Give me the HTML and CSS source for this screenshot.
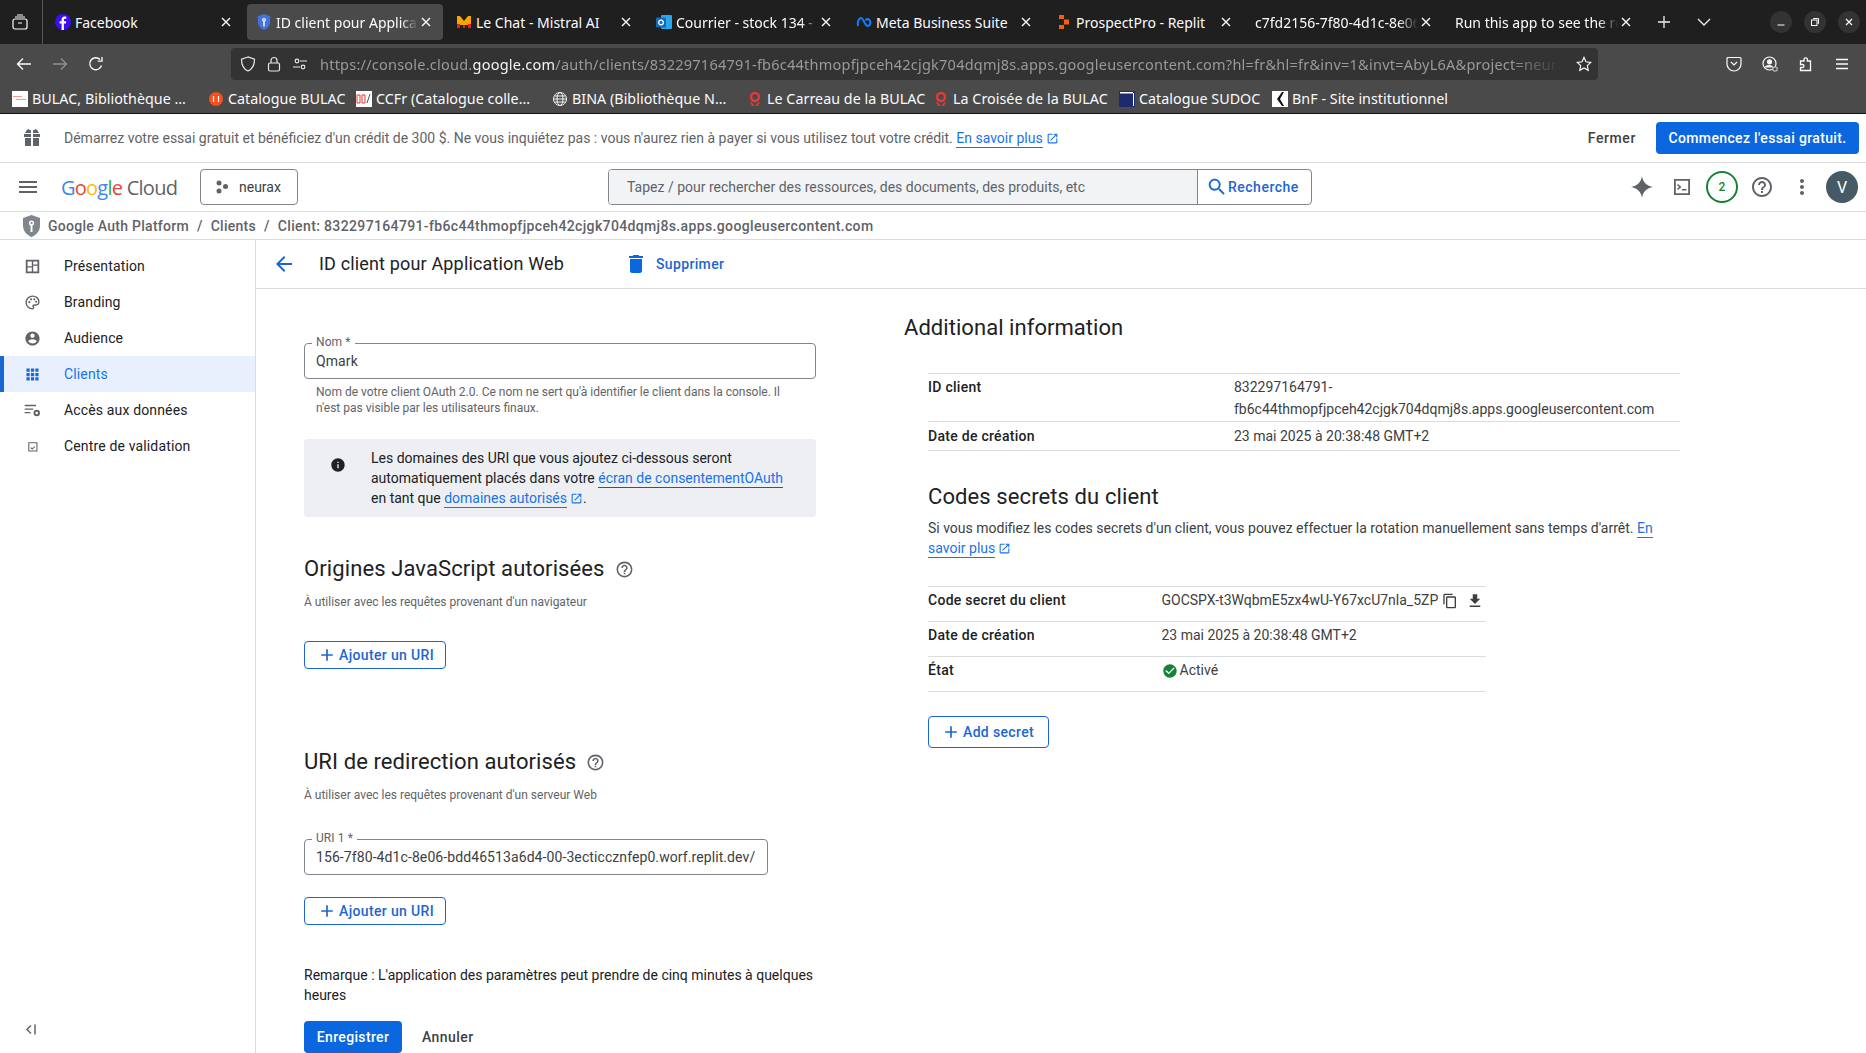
FILE: index.html
```html
<!DOCTYPE html>
<html lang="fr">
<head>
<meta charset="utf-8">
<title>ID client pour Application Web</title>
<link rel="stylesheet" href="styles.css">
</head>
<body>
<svg class="defs" aria-hidden="true">
  <symbol id="i-back" viewBox="0 0 24 24"><path d="M20 11H7.83l5.59-5.59L12 4l-8 8 8 8 1.41-1.41L7.83 13H20v-2z"/></symbol>
  <symbol id="i-menu" viewBox="0 0 24 24"><path d="M3 18h18v-2H3v2zm0-5h18v-2H3v2zm0-7v2h18V6H3z"/></symbol>
  <symbol id="i-del" viewBox="0 0 24 24"><path d="M6 19c0 1.1.9 2 2 2h8c1.100 0 2-.9 2-2V7H6v12zM19 4h-3.500l-1-1h-5l-1 1H5v2h14V4z"/></symbol>
  <symbol id="i-help" viewBox="0 0 24 24"><path d="M11 18h2v-2h-2v2zm1-16C6.480 2 2 6.480 2 12s4.480 10 10 10 10-4.480 10-10S17.520 2 12 2zm0 18c-4.410 0-8-3.590-8-8s3.590-8 8-8 8 3.590 8 8-3.590 8-8 8zm0-14c-2.210 0-4 1.790-4 4h2c0-1.100.9-2 2-2s2 .9 2 2c0 2-3 1.750-3 5h2c0-2.250 3-2.500 3-5 0-2.210-1.790-4-4-4z"/></symbol>
  <symbol id="i-info" viewBox="0 0 24 24"><path d="M12 2C6.480 2 2 6.480 2 12s4.480 10 10 10 10-4.480 10-10S17.520 2 12 2zm1 15h-2v-6h2v6zm0-8h-2V7h2v2z"/></symbol>
  <symbol id="i-add" viewBox="0 0 24 24"><path d="M19 13h-6v6h-2v-6H5v-2h6V5h2v6h6v2z"/></symbol>
  <symbol id="i-search" viewBox="0 0 24 24"><path d="M15.500 14h-.79l-.28-.27C15.410 12.590 16 11.110 16 9.500 16 5.910 13.090 3 9.500 3S3 5.910 3 9.500 5.910 16 9.500 16c1.610 0 3.090-.59 4.230-1.570l.27.28v.79l5 4.990L20.490 19l-4.990-5zm-6 0C7.010 14 5 11.990 5 9.500S7.010 5 9.500 5 14 7.010 14 9.500 11.990 14 9.500 14z"/></symbol>
  <symbol id="i-more" viewBox="0 0 24 24"><path d="M12 8c1.100 0 2-.9 2-2s-.9-2-2-2-2 .9-2 2 .9 2 2 2zm0 2c-1.100 0-2 .9-2 2s.9 2 2 2 2-.9 2-2-.9-2-2-2zm0 6c-1.100 0-2 .9-2 2s.9 2 2 2 2-.9 2-2-.9-2-2-2z"/></symbol>
  <symbol id="i-copy" viewBox="0 0 24 24"><path d="M16 1H4c-1.100 0-2 .9-2 2v14h2V3h12V1zm3 4H8c-1.100 0-2 .9-2 2v14c0 1.100.9 2 2 2h11c1.100 0 2-.9 2-2V7c0-1.100-.9-2-2-2zm0 16H8V7h11v14z"/></symbol>
  <symbol id="i-dl" viewBox="0 0 24 24"><path d="M19 9h-4V3H9v6H5l7 7 7-7zM5 18v2h14v-2H5z"/></symbol>
  <symbol id="i-ok" viewBox="0 0 24 24"><path d="M12 2C6.480 2 2 6.480 2 12s4.480 10 10 10 10-4.480 10-10S17.520 2 12 2zm-2 15l-5-5 1.410-1.410L10 14.170l7.590-7.590L19 8l-9 9z"/></symbol>
  <symbol id="i-ext" viewBox="0 0 24 24"><path d="M19 19H5V5h7V3H5c-1.110 0-2 .9-2 2v14c0 1.100.89 2 2 2h14c1.100 0 2-.9 2-2v-7h-2v7zM14 3v2h3.590l-9.830 9.830 1.410 1.410L19 6.410V10h2V3h-7z"/></symbol>
  <symbol id="i-person" viewBox="0 0 24 24"><path d="M12 2C6.480 2 2 6.480 2 12s4.480 10 10 10 10-4.480 10-10S17.520 2 12 2zm0 3c1.660 0 3 1.340 3 3s-1.340 3-3 3-3-1.340-3-3 1.340-3 3-3zm0 14.200c-2.500 0-4.710-1.280-6-3.220.03-1.990 4-3.080 6-3.080 1.990 0 5.970 1.090 6 3.080-1.290 1.940-3.500 3.220-6 3.220z"/></symbol>
  <symbol id="i-close" viewBox="0 0 16 16"><path d="M4 4l8 8M12 4l-8 8" fill="none" stroke="currentColor" stroke-width="1.400"/></symbol>
  <symbol id="i-shield" viewBox="3 1 18 22"><path d="M12 1 3.500 4v7.500c0 5.300 3.600 9.500 8.500 11.500 4.900-2 8.500-6.200 8.500-11.500V4z"/><circle cx="12" cy="9" r="2.600" fill="#fff"/><rect x="11" y="11" width="2" height="7" fill="#fff"/><circle cx="12" cy="9" r="1.100"/></symbol>
</svg>

<div class="tabstrip">
  <div class="tabs-menu">
    <svg class="ff-ic" viewBox="0 0 16 16" fill="none" stroke="currentColor" stroke-width="1.200"><rect x="1" y="5" width="14" height="10" rx="2"/><path d="M3 3h10M5 1h6M6 9h4"/></svg>
  </div>
  <div class="tab">
    <svg class="fav" viewBox="0 0 16 16"><circle cx="8" cy="8" r="8" fill="#3b10f0"/><path d="M8.900 16V9.500h2l.3-2.300H8.900V5.800c0-.7.3-1.100 1.200-1.100h1.200v-2c-.5-.1-1.100-.1-1.700-.1-1.800 0-3 1.100-3 3v1.600h-2v2.300h2V16z" fill="#fff"/></svg>
    <span class="tab-title">Facebook</span>
    <svg class="tab-x"><use href="#i-close"/></svg>
  </div>
  <div class="tab active">
    <svg class="fav shield-blue"><use href="#i-shield"/></svg>
    <span class="tab-title fade">ID client pour Application Web</span>
    <svg class="tab-x"><use href="#i-close"/></svg>
  </div>
  <div class="tab">
    <svg class="fav" viewBox="0 0 16 16"><path d="M1 14V2h3l4 5 4-5h3v12h-3v-3H9v3H7v-3H4v3z" fill="#f7a600"/><path d="M1 14v-4h3v4zM12 14v-4h3v4zM7 14v-3h2v3z" fill="#e8201a"/></svg>
    <span class="tab-title">Le Chat - Mistral AI</span>
    <svg class="tab-x"><use href="#i-close"/></svg>
  </div>
  <div class="tab">
    <svg class="fav" viewBox="0 0 16 16"><rect x="5" y="1" width="11" height="14" rx="1" fill="#28a8ea"/><rect x="0" y="3.500" width="10" height="10" rx="1" fill="#0f6cbd"/><circle cx="5" cy="8.500" r="2.300" fill="none" stroke="#fff" stroke-width="1.300"/></svg>
    <span class="tab-title fade">Courrier - stock 134 - Outlook</span>
    <svg class="tab-x"><use href="#i-close"/></svg>
  </div>
  <div class="tab">
    <svg class="fav" viewBox="0 0 16 16" fill="none" stroke="#1a7cf5" stroke-width="2"><path d="M2 12C1 8 3 4 5 4c2.500 0 4 8 6.500 8C14 12 15 9 14 7c-1-2-3-3-4.500-.5"/></svg>
    <span class="tab-title">Meta Business Suite</span>
    <svg class="tab-x"><use href="#i-close"/></svg>
  </div>
  <div class="tab">
    <svg class="fav" viewBox="0 0 16 16"><path d="M3 1h5v4H3zM8 5.500h5v5H8zM3 11h5v4H3z" fill="#f26207"/></svg>
    <span class="tab-title">ProspectPro - Replit</span>
    <svg class="tab-x"><use href="#i-close"/></svg>
  </div>
  <div class="tab nofav">
    <span class="tab-title fade">c7fd2156-7f80-4d1c-8e06-bdd46513a6d4</span>
    <svg class="tab-x"><use href="#i-close"/></svg>
  </div>
  <div class="tab nofav">
    <span class="tab-title fade">Run this app to see the results here</span>
    <svg class="tab-x"><use href="#i-close"/></svg>
  </div>
  <div class="tab-tools">
    <svg class="tool-s" viewBox="0 0 16 16" fill="none" stroke="currentColor" stroke-width="1.300"><path d="M8 2v12M2 8h12"/></svg>
    <svg class="tool-s" viewBox="0 0 16 16" fill="none" stroke="currentColor" stroke-width="1.300"><path d="M2 5l6 6 6-6"/></svg>
  </div>
  <div class="win-ctl">
    <span class="win-btn"><svg viewBox="0 0 12 12" fill="none" stroke="currentColor"><path d="M2.500 9h7"/></svg></span>
    <span class="win-btn"><svg viewBox="0 0 12 12" fill="none" stroke="currentColor"><rect x="2.500" y="4" width="5.500" height="5.500"/><path d="M4.500 3.500V2.500h5v5h-1"/></svg></span>
    <span class="win-btn"><svg viewBox="0 0 12 12" fill="none" stroke="currentColor" stroke-width="1.200"><path d="M3 3l6 6M9 3l-6 6"/></svg></span>
  </div>
</div>

<div class="toolbar">
  <div class="nav-btns">
    <svg class="ff-ic" viewBox="0 0 16 16" fill="none" stroke="currentColor" stroke-width="1.300"><path d="M15 8H1.500M7 2.500 1.500 8 7 13.500"/></svg>
    <svg class="ff-ic dim" viewBox="0 0 16 16" fill="none" stroke="currentColor" stroke-width="1.300"><path d="M1 8h13.500M9 2.500 14.500 8 9 13.500"/></svg>
    <svg class="ff-ic" viewBox="0 0 16 16" fill="none" stroke="currentColor" stroke-width="1.300"><path d="M13.500 9.500A6 6 0 1 1 12 3.500"/><path d="M14 1v4.200H9.800" /></svg>
  </div>
  <div class="urlbar">
    <svg class="ff-ic url-ic" viewBox="0 0 16 16" fill="none" stroke="currentColor" stroke-width="1.200"><path d="M8 1 1.500 3.200c0 6 2 9.800 6.500 11.800 4.500-2 6.500-5.800 6.500-11.800z"/></svg>
    <svg class="ff-ic url-ic" viewBox="0 0 16 16" fill="none" stroke="currentColor" stroke-width="1.200"><rect x="2.500" y="7" width="11" height="8" rx="1.500"/><path d="M5 7V4.500a3 3 0 0 1 6 0V7"/></svg>
    <svg class="ff-ic url-ic" viewBox="0 0 16 16" fill="none" stroke="currentColor" stroke-width="1.200"><path d="M8 5h7M1 11h7"/><circle cx="5" cy="5" r="1.800"/><circle cx="11" cy="11" r="1.800"/></svg>
    <span class="url-text">https://console.cloud.<b>google.com</b>/auth/clients/832297164791-fb6c44thmopfjpceh42cjgk704dqmj8s.apps.googleusercontent.com?hl=fr&amp;hl=fr&amp;inv=1&amp;invt=AbyL6A&amp;project=neura</span>
    <svg class="ff-ic url-star" viewBox="0 0 16 16" fill="none" stroke="currentColor" stroke-width="1.200"><path d="M8 1.500l2 4.300 4.700.6-3.400 3.200.9 4.700L8 12l-4.200 2.300.9-4.700L1.300 6.400 6 5.800z"/></svg>
  </div>
  <div class="ext-btns">
    <svg class="ff-ic" viewBox="0 0 16 16" fill="none" stroke="currentColor" stroke-width="1.200"><path d="M2 1.500h12a1 1 0 0 1 1 1V8a7 7 0 0 1-14 0V2.500a1 1 0 0 1 1-1z"/><path d="M5 6 8 9l3-3"/></svg>
    <svg class="ff-ic" viewBox="0 0 16 16" fill="none" stroke="currentColor" stroke-width="1.200"><circle cx="7.500" cy="7.500" r="6.500"/><circle cx="7.500" cy="5.800" r="2" fill="currentColor"/><path d="M3.500 11c1-2 6-2 7 0z" fill="currentColor"/><circle cx="13" cy="13" r="2.200" fill="#4a4a4a" stroke="#bbb"/></svg>
    <svg class="ff-ic" viewBox="0 0 16 16" fill="none" stroke="currentColor" stroke-width="1.300"><path d="M2.500 5H6V3.500a1.700 1.700 0 0 1 3.400 0V5h3.100v9.500H2.500V11.500h2a1.500 1.500 0 0 0 0-3h-2z"/></svg>
    <svg class="ff-ic" viewBox="0 0 16 16" fill="none" stroke="currentColor" stroke-width="1.300"><path d="M2 3.500h12M2 8h12M2 12.500h12"/></svg>
  </div>
</div>

<div class="bookmarks">
  <div class="bm"><svg class="bm-ic" viewBox="0 0 16 16"><rect width="16" height="16" fill="#fff"/><path d="M1 5h9v1H1zM4 8h10v1H4z" fill="#f0a080"/></svg><span>BULAC, Bibliothèque …</span></div>
  <div class="bm"><svg class="bm-ic" viewBox="0 0 16 16"><circle cx="8" cy="8" r="7" fill="#f4511e"/><path d="M5.500 5v6M10.500 5v6" stroke="#fff" stroke-width="1.200"/></svg><span>Catalogue BULAC</span></div>
  <div class="bm"><svg class="bm-ic" viewBox="0 0 16 16"><rect width="16" height="16" fill="#fff"/><path d="M1 4h3v8H1zM6 4h3v8H6z" fill="none" stroke="#e53935"/><path d="M11 12l3-9" stroke="#555"/></svg><span>CCFr (Catalogue colle…</span></div>
  <div class="bm"><svg class="bm-ic" viewBox="0 0 16 16" fill="none" stroke="#f5f5f5" stroke-width="1"><circle cx="8" cy="8" r="6.500"/><ellipse cx="8" cy="8" rx="3" ry="6.500"/><path d="M1.500 8h13M2.500 5h11M2.500 11h11"/></svg><span>BINA (Bibliothèque N…</span></div>
  <div class="bm"><svg class="bm-ic" viewBox="0 0 16 16"><circle cx="8" cy="6" r="4" fill="none" stroke="#e53935" stroke-width="2.500"/><path d="M3 11c3 0 3 3 5 4 2-1 2-4 5-4l-2 4H5z" fill="#e53935"/></svg><span>Le Carreau de la BULAC</span></div>
  <div class="bm"><svg class="bm-ic" viewBox="0 0 16 16"><circle cx="8" cy="6" r="4" fill="none" stroke="#e53935" stroke-width="2.500"/><path d="M3 11c3 0 3 3 5 4 2-1 2-4 5-4l-2 4H5z" fill="#e53935"/></svg><span>La Croisée de la BULAC</span></div>
  <div class="bm"><svg class="bm-ic" viewBox="0 0 16 16"><rect width="16" height="16" fill="#1e2a6e"/><path d="M1 1h13v1.500H1z" fill="#fff"/><path d="M14 2h1v13h-1z" fill="#fff"/></svg><span>Catalogue SUDOC</span></div>
  <div class="bm"><svg class="bm-ic" viewBox="0 0 16 16"><rect width="16" height="16" fill="#fff"/><path d="M10 1 5 8l5 7h2L8 8l4-7z" fill="#111"/></svg><span>BnF - Site institutionnel</span></div>
</div>

<div class="banner">
  <svg class="gift" viewBox="0 0 18 18"><path d="M2 4h6V1.500L5 0 3.500 1.500zM10 4h6l-1.500-2.500L13 0l-3 1.500zM1 5h7v3H1zM10 5h7v3h-7zM2 9h6v8H2zM10 9h6v8h-6z"/></svg>
  <p class="banner-text">Démarrez votre essai gratuit et bénéficiez d'un crédit de 300 $. Ne vous inquiétez pas : vous n'aurez rien à payer si vous utilisez tout votre crédit. <a class="lnk">En savoir plus</a><svg class="ext"><use href="#i-ext"/></svg></p>
  <span class="fermer">Fermer</span>
  <span class="btn-solid trial">Commencez l'essai gratuit.</span>
</div>

<header class="topbar">
  <svg class="ic24 menu-ic"><use href="#i-menu"/></svg>
  <div class="logo"><span class="g-b">G</span><span class="g-r">o</span><span class="g-y">o</span><span class="g-b">g</span><span class="g-g">l</span><span class="g-r">e</span> <span class="g-c">Cloud</span></div>
  <div class="project">
    <svg class="proj-ic" viewBox="0 0 14 14"><circle cx="4" cy="3" r="2.500"/><circle cx="10.500" cy="6.500" r="2.500"/><circle cx="4" cy="11" r="2.500"/></svg>
    <span>neurax</span>
  </div>
  <div class="search">
    <span class="search-input">Tapez / pour rechercher des ressources, des documents, des produits, etc</span>
    <span class="search-btn"><svg class="ic22"><use href="#i-search"/></svg>Recherche</span>
  </div>
  <div class="top-icons">
    <span class="top-ic"><svg class="ic24" viewBox="0 0 24 24"><path d="M12 1c.8 6 5 10.200 11 11-6 .8-10.200 5-11 11-.8-6-5-10.200-11-11 6-.8 10.200-5 11-11z"/></svg></span>
    <span class="top-ic"><svg class="term" viewBox="0 0 18 18"><path d="M1 1h16v16H1zm1.800 1.800v12.400h12.400V2.800zM5 6l3.500 3L5 12l-1-1 2-2-2-2zm4 5h4.500v1.500H9z" fill-rule="evenodd"/></svg></span>
    <span class="top-ic"><span class="badge">2</span></span>
    <span class="top-ic"><svg class="ic24"><use href="#i-help"/></svg></span>
    <span class="top-ic"><svg class="ic24"><use href="#i-more"/></svg></span>
    <span class="top-ic"><span class="avatar">V</span></span>
  </div>
</header>

<nav class="crumbs">
  <svg class="crumb-shield"><use href="#i-shield"/></svg>
  <span>Google Auth Platform</span><i>/</i><span>Clients</span><i>/</i><span class="crumb-last">Client: 832297164791-fb6c44thmopfjpceh42cjgk704dqmj8s.apps.googleusercontent.com</span>
</nav>

<div class="app">
  <aside class="side">
    <ul class="side-list">
      <li class="side-item"><svg class="side-ic" viewBox="0 0 24 24"><path d="M2.500 2.500h19v19h-19zm2.500 2.500v6.500h6v-6.500zm8 0v4h6v-4zm0 6v8h6v-8zm-8 2.500v5.500h6v-5.500z" fill-rule="evenodd"/></svg>Présentation</li>
      <li class="side-item"><svg class="side-ic" viewBox="0 0 24 24"><path d="M12 3a9 9 0 0 0 0 18c1 0 1.600-.7 1.600-1.500 0-1.100-.9-1.400-.9-2.500 0-.9.800-1.500 1.700-1.500H16c2.800 0 5-2.200 5-5 0-4.200-4-7.500-9-7.500z" fill="none" stroke="currentColor" stroke-width="2"/><circle cx="7.500" cy="11.500" r="1.500"/><circle cx="10" cy="7.500" r="1.500"/><circle cx="14.500" cy="7.500" r="1.500"/><circle cx="17" cy="11" r="1.500"/></svg>Branding</li>
      <li class="side-item"><svg class="side-ic"><use href="#i-person"/></svg>Audience</li>
      <li class="side-item current"><svg class="side-ic" viewBox="0 0 24 24"><path d="M3.500 3.500h4.500v4.500H3.500zM9.800 3.500h4.500v4.500H9.800zM16 3.500h4.500v4.500H16zM3.500 9.800h4.500v4.500H3.500zM9.800 9.800h4.500v4.500H9.800zM16 9.800h4.500v4.500H16zM3.500 16h4.500v4.500H3.500zM9.800 16h4.500v4.500H9.800zM16 16h4.500v4.500H16z"/></svg>Clients</li>
      <li class="side-item"><svg class="side-ic" viewBox="0 0 24 24"><path d="M1 4h16v2H1zM1 9h12v2H1zM1 14h8v2H1z"/><circle cx="18" cy="15.500" r="3.200" fill="none" stroke="currentColor" stroke-width="2.600"/></svg>Accès aux données</li>
      <li class="side-item"><svg class="side-ic" viewBox="0 0 24 24"><path d="M6 6h13v13H6zm1.500 1.500v10h10v-10zm2.500 5.500 1.600 1.600 3-3 1 1-4 4-2.600-2.600z" fill-rule="evenodd"/></svg>Centre de validation</li>
    </ul>
    <svg class="collapse" viewBox="0 0 16 16" fill="none" stroke="currentColor" stroke-width="1.500"><path d="M12 2.500v10M8 3.500 4 7.500l4 4"/></svg>
  </aside>

  <main class="page">
    <div class="page-head">
      <svg class="ic24 back"><use href="#i-back"/></svg>
      <h1>ID client pour Application Web</h1>
      <span class="del"><svg class="ic24"><use href="#i-del"/></svg>Supprimer</span>
    </div>
    <div class="cols">
      <section class="col-left">
        <div class="field name-field">
          <label>Nom *</label>
          <span>Qmark</span>
        </div>
        <p class="hint">Nom de votre client OAuth 2.0. Ce nom ne sert qu'à identifier le client dans la console. Il n'est pas visible par les utilisateurs finaux.</p>
        <div class="note-box">
          <svg class="note-ic"><use href="#i-info"/></svg>
          <p>Les domaines des URI que vous ajoutez ci-dessous seront automatiquement placés dans votre <a class="lnk visited">écran de consentementOAuth</a> en tant que <a class="lnk">domaines autorisés</a><svg class="ext"><use href="#i-ext"/></svg>.</p>
        </div>
        <h2 class="sec first">Origines JavaScript autorisées<svg class="help"><use href="#i-help"/></svg></h2>
        <p class="sub">À utiliser avec les requêtes provenant d'un navigateur</p>
        <span class="btn-out add-js"><svg class="ic20"><use href="#i-add"/></svg>Ajouter un URI</span>
        <h2 class="sec second">URI de redirection autorisés<svg class="help"><use href="#i-help"/></svg></h2>
        <p class="sub">À utiliser avec les requêtes provenant d'un serveur Web</p>
        <div class="field uri-field">
          <label>URI 1 *</label>
          <span>156-7f80-4d1c-8e06-bdd46513a6d4-00-3ecticcznfep0.worf.replit.dev/</span>
        </div>
        <span class="btn-out add-uri"><svg class="ic20"><use href="#i-add"/></svg>Ajouter un URI</span>
        <p class="remark">Remarque : L'application des paramètres peut prendre de cinq minutes à quelques heures</p>
        <div class="actions">
          <span class="btn-solid save">Enregistrer</span>
          <span class="cancel">Annuler</span>
        </div>
      </section>

      <section class="col-right">
        <h2 class="additional">Additional information</h2>
        <dl class="info-table">
          <div class="row row-id"><dt>ID client</dt><dd>832297164791-<br>fb6c44thmopfjpceh42cjgk704dqmj8s.apps.googleusercontent.com</dd></div>
          <div class="row"><dt>Date de création</dt><dd>23 mai 2025 à 20:38:48 GMT+2</dd></div>
        </dl>
        <h2 class="sec secrets">Codes secrets du client</h2>
        <p class="secrets-text">Si vous modifiez les codes secrets d'un client, vous pouvez effectuer la rotation manuellement sans temps d'arrêt. <a class="lnk">En savoir plus</a><svg class="ext"><use href="#i-ext"/></svg></p>
        <dl class="secret-table">
          <div class="srow"><dt>Code secret du client</dt><dd>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<svg class="ic16 copy"><use href="#i-copy"/></svg><svg class="ic18 dl"><use href="#i-dl"/></svg></dd></div>
          <div class="srow"><dt>Date de création</dt><dd>23 mai 2025 à 20:38:48 GMT+2</dd></div>
          <div class="srow"><dt>État</dt><dd><svg class="ic16 ok"><use href="#i-ok"/></svg>Activé</dd></div>
        </dl>
        <span class="btn-out add-secret"><svg class="ic20"><use href="#i-add"/></svg>Add secret</span>
      </section>
    </div>
  </main>
</div>
</body>
</html>
```
FILE: styles.css
```css
* { box-sizing: border-box; }
html, body { margin: 0; padding: 0; }
body {
  width: 1866px;
  height: 1053px;
  overflow: hidden;
  background: #fff;
  color: #202124;
  font-family: Roboto, "Liberation Sans", sans-serif;
  font-size: 14px;
  display: flex;
  flex-direction: column;
}
p, h1, h2, ul, dl, dd { margin: 0; padding: 0; }
ul { list-style: none; }
.defs { display: none; }
svg { flex: none; }

/* Browser chrome */
.tabstrip {
  height: 44px;
  flex: none;
  background: #1f1f1f;
  color: #fbfbfe;
  display: flex;
  align-items: center;
  font-family: "Noto Sans", sans-serif;
  font-size: 14px;
}
.tabs-menu {
  width: 43px;
  height: 44px;
  border-right: 1px solid #555;
  display: flex;
  align-items: center;
  justify-content: center;
  flex: none;
  padding-right: 2px;
}
.ff-ic { width: 16px; height: 16px; }
.tab {
  width: 196px;
  height: 36px;
  margin: 0 2px;
  flex: none;
  border-radius: 4px;
  padding: 0 9px 0 9px;
  display: flex;
  align-items: center;
  gap: 4px;
}
.tab:nth-child(2) { margin-left: 4px; padding-left: 8px; }
.tab.active { background: #4a4a4a; }
.tab.nofav { padding-left: 8px; }
.fav { width: 16px; height: 16px; }
.shield-blue { fill: #4372d9; }
.tab-title { flex: 1; min-width: 0; white-space: nowrap; overflow: hidden; }
.tab-title.fade {
  -webkit-mask-image: linear-gradient(to right, #000 88%, transparent 100%);
  mask-image: linear-gradient(to right, #000 88%, transparent 100%);
}
.tab-x { width: 16px; height: 16px; flex: none; color: #fbfbfe; margin-left: -4px; }
.tab-tools { display: flex; gap: 24px; margin-left: 11px; color: #eee; }
.tool-s { width: 16px; height: 16px; }
.win-ctl { margin-left: auto; display: flex; gap: 12px; padding-right: 6px; }
.win-btn {
  width: 22px;
  height: 22px;
  border-radius: 50%;
  background: #333;
  display: flex;
  align-items: center;
  justify-content: center;
}
.win-btn svg { width: 12px; height: 12px; }

.toolbar {
  height: 38px;
  flex: none;
  background: #4a4a4a;
  color: #fbfbfe;
  display: flex;
  align-items: flex-start;
  padding-top: 4px;
  font-family: "Noto Sans", sans-serif;
}
.nav-btns {
  width: 231px;
  height: 32px;
  flex: none;
  display: flex;
  align-items: center;
  gap: 20px;
  padding-left: 16px;
}
.nav-btns .dim { opacity: .4; }
.urlbar {
  width: 1367px;
  height: 32px;
  background: #333;
  border-radius: 4px;
  display: flex;
  align-items: center;
  gap: 10px;
  padding: 0 6px 0 9px;
  flex: none;
}
.url-ic { color: #e8e8e8; }
.url-ic:nth-child(3) { margin-right: 2px; }
.url-text {
  flex: 1;
  min-width: 0;
  white-space: nowrap;
  overflow: hidden;
  color: #9a9a9a;
  font-size: 14.500px;
  letter-spacing: .23px;
  -webkit-mask-image: linear-gradient(to right, #000 96%, transparent 100%);
  mask-image: linear-gradient(to right, #000 96%, transparent 100%);
}
.url-text b { font-weight: 400; color: #f4f4f4; }
.url-star { margin-left: 6px; }
.ext-btns {
  display: flex;
  align-items: center;
  gap: 20px;
  height: 32px;
  padding-left: 128px;
}

.bookmarks {
  height: 32px;
  flex: none;
  background: #4a4a4a;
  border-bottom: 1px solid #111;
  color: #fbfbfe;
  display: grid;
  grid-template-columns: 196px 148px 196px 195px 186px 186px 153px auto;
  align-items: center;
  padding: 2px 0 0 12px;
  font-family: "Noto Sans", sans-serif;
  font-size: 14.300px;
  letter-spacing: .03px;
}
.bm { display: flex; align-items: center; gap: 4px; white-space: nowrap; }
.bm-ic { width: 16px; height: 16px; }

/* Trial banner */
.banner {
  height: 49px;
  flex: none;
  border-bottom: 1px solid #dadce0;
  display: flex;
  align-items: center;
  padding: 0 7px 0 23px;
}
.gift { width: 18px; height: 18px; fill: #5f6368; margin-right: 23px; }
.banner-text { color: #5f6368; font-size: 14px; flex: 1; white-space: nowrap; }
.lnk {
  color: #1a73e8;
  border-bottom: 1px solid #1a73e8;
  padding-bottom: 1px;
}
.lnk.visited { border-bottom-color: #6a2fb5; }
.ext { width: 13px; height: 13px; fill: #1a73e8; margin-left: 3px; vertical-align: -2px; }
.fermer { color: #3c4043; font-weight: 500; margin-right: 20px; letter-spacing: .6px; }
.btn-solid {
  background: #0b67df;
  color: #fff;
  font-weight: 500;
  border-radius: 4px;
  display: flex;
  align-items: center;
  justify-content: center;
  letter-spacing: .35px;
}
.trial { width: 203px; height: 32px; }

/* Console header */
.topbar {
  height: 49px;
  flex: none;
  border-bottom: 1px solid #dadce0;
  display: flex;
  align-items: center;
  padding: 0 8px 0 16px;
}
.ic24 { width: 24px; height: 24px; fill: #5f6368; }
.ic22 { width: 22px; height: 22px; fill: currentColor; }
.ic20 { width: 20px; height: 20px; fill: currentColor; }
.ic18 { width: 18px; height: 18px; fill: currentColor; }
.ic16 { width: 16px; height: 16px; fill: currentColor; }
.menu-ic { margin-right: 21px; }
.logo { width: 139px; font-size: 20px; letter-spacing: -0.75px; font-family: "Open Sans", sans-serif; white-space: nowrap; flex: none; }
.g-b { color: #4285f4; } .g-r { color: #ea4335; } .g-y { color: #fbbc04; } .g-g { color: #34a853; } .g-c { color: #5f6368; }
.project {
  width: 98px;
  height: 36px;
  border: 1px solid #80868b;
  border-radius: 4px;
  display: flex;
  align-items: center;
  gap: 10px;
  padding-left: 14px;
  flex: none;
  color: #3c4043;
}
.proj-ic { width: 14px; height: 14px; fill: #5f6368; }
.search {
  width: 704px;
  height: 36px;
  margin-left: 310px;
  border: 1px solid #80868b;
  border-radius: 4px;
  display: flex;
  overflow: hidden;
  flex: none;
}
.search-input {
  flex: 1;
  background: #f1f3f4;
  color: #5f6368;
  display: flex;
  align-items: center;
  padding-left: 18px;
  border-right: 1px solid #80868b;
}
.search-btn {
  width: 113px;
  display: flex;
  align-items: center;
  padding-left: 8px;
  color: #1a67d2;
  font-weight: 500;
  letter-spacing: .5px;
}
.top-icons { margin-left: auto; display: flex; gap: 8px; }
.top-ic { width: 32px; height: 32px; display: flex; align-items: center; justify-content: center; }
.term { width: 18px; height: 18px; fill: #5f6368; }
.badge {
  width: 32px;
  height: 32px;
  border-radius: 50%;
  border: 2px solid #188038;
  color: #188038;
  font-weight: 500;
  font-size: 12px;
  display: flex;
  align-items: center;
  justify-content: center;
}
.avatar {
  width: 32px;
  height: 32px;
  border-radius: 50%;
  background: #455a64;
  color: #fff;
  font-size: 16px;
  display: flex;
  align-items: center;
  justify-content: center;
}

.crumbs {
  height: 28px;
  flex: none;
  border-bottom: 1px solid #dadce0;
  display: flex;
  align-items: center;
  padding-left: 22px;
  color: #5f6368;
  font-weight: 500;
  white-space: nowrap;
  letter-spacing: .27px;
}
.crumb-shield { width: 19px; height: 22px; fill: #80868b; margin-right: 7px; }
.crumbs i { font-style: normal; margin: 0 8px; }
.crumb-last { letter-spacing: .36px; }

/* App body */
.app { flex: 1; min-height: 0; display: flex; }
.side {
  width: 256px;
  flex: none;
  border-right: 1px solid #dadce0;
  padding-top: 8px;
  position: relative;
}
.side-item {
  height: 36px;
  display: flex;
  align-items: center;
  color: #202124;
  padding-left: 24px;
  letter-spacing: .15px;
}
.side-ic { width: 17px; height: 17px; fill: #5f6368; margin-right: 23px; color: #5f6368; }
.side-item.current {
  background: #e8f0fe;
  color: #1a73e8;
  border-left: 4px solid #1967d2;
  padding-left: 20px;
}
.side-item.current .side-ic { fill: #1967d2; }
.collapse { position: absolute; left: 23px; bottom: 15px; width: 16px; height: 16px; color: #5f6368; }

.page { flex: 1; min-width: 0; display: flex; flex-direction: column; }
.page-head {
  height: 49px;
  flex: none;
  border-bottom: 1px solid #dadce0;
  display: flex;
  align-items: center;
  padding-left: 16px;
}
.back { fill: #1a67d2; margin-right: 23px; margin-top: -1px; }
.page-head h1 { font-size: 18px; font-weight: 400; margin-right: 59px; width: 246px; white-space: nowrap; color: #202124; margin-top: -2px; letter-spacing: .16px; }
.del { display: flex; align-items: center; gap: 8px; color: #1a67d2; font-weight: 500; letter-spacing: .35px; }
.del .ic24 { fill: #0b67df; }
.cols { display: flex; flex: 1; min-height: 0; }
.col-left { width: 648px; padding-left: 48px; flex: none; }
.col-right { flex: 1; min-width: 0; }

.field {
  height: 36px;
  border: 1px solid #80868b;
  border-radius: 4px;
  display: flex;
  align-items: center;
  padding-left: 11px;
  position: relative;
  color: #3c4043;
  white-space: nowrap;
  letter-spacing: .09px;
}
.field label {
  position: absolute;
  left: 7px;
  top: -9px;
  background: #fff;
  padding: 0 4px;
  font-size: 12px;
  line-height: 14px;
  color: #5f6368;
}
.name-field { width: 512px; margin-top: 54px; }
.hint { width: 490px; margin: 5px 0 0 12px; font-size: 12px; line-height: 16px; color: #5f6368; }
.note-box {
  width: 512px;
  height: 78px;
  margin-top: 23px;
  background: #edeff3;
  border-radius: 4px;
  display: flex;
  padding: 9px 26px 0 26px;
}
.note-ic { width: 16px; height: 16px; fill: #202124; margin: 9px 25px 0 0; }
.note-box p { line-height: 20px; color: #202124; }
.sec { font-size: 22px; font-weight: 400; color: #202124; line-height: 28px; display: flex; align-items: center; white-space: nowrap; letter-spacing: .1px; }
.sec.first { margin-top: 38px; }
.sec.second { margin-top: 79px; }
.help { width: 19px; height: 19px; fill: #5f6368; margin-left: 10px; }
.sub { font-size: 12px; line-height: 16px; color: #5f6368; margin-top: 11px; }
.btn-out {
  display: flex;
  align-items: center;
  border: 1px solid #1a67d2;
  border-radius: 4px;
  color: #1a67d2;
  font-weight: 500;
  padding-left: 12px;
  gap: 2px;
  letter-spacing: .35px;
}
.add-js { width: 142px; height: 28px; margin-top: 31px; }
.uri-field { width: 464px; margin-top: 36px; }
.add-uri { width: 142px; height: 28px; margin-top: 22px; }
.remark { margin-top: 40px; line-height: 20px; width: 512px; color: #202124; }
.actions { display: flex; align-items: center; margin-top: 16px; gap: 20px; }
.save { width: 98px; height: 32px; }
.cancel { color: #3c4043; font-weight: 500; letter-spacing: .45px; }

.additional { font-size: 22px; font-weight: 400; line-height: 28px; margin-top: 25px; color: #202124; letter-spacing: .05px; }
.info-table { width: 752px; margin: 31px 0 0 24px; border-top: 1px solid #dadce0; }
.row { display: flex; border-bottom: 1px solid #dadce0; padding: 4px 0 4px; line-height: 20px; min-height: 28px; }
.row-id { padding: 2px 0 1px; line-height: 22px; }
.row dt, .srow dt { color: #202124; font-weight: 500; letter-spacing: .28px; }
.row dt { width: 306px; flex: none; }
.row dd { color: #3c4043; }
.secrets { margin: 32px 0 0 24px; }
.secrets-text { width: 752px; margin: 7px 0 0 24px; line-height: 20px; color: #3c4043; }
.secret-table { width: 558px; margin: 28px 0 0 24px; border-top: 1px solid #dadce0; }
.srow { display: flex; height: 35px; border-bottom: 1px solid #dadce0; padding-top: 3px; line-height: 20px; }
.srow dt { width: 233.500px; flex: none; }
.srow dd { display: flex; align-items: flex-start; color: #3c4043; white-space: nowrap; }
.copy { fill: #3c4043; margin: 3px 0 0 4px; }
.dl { fill: #3c4043; margin: 2px 0 0 8px; }
.ok { fill: #188038; margin: 3px 2px 0 0; }
.add-secret { width: 121px; height: 32px; margin: 24px 0 0 24px; }
```
